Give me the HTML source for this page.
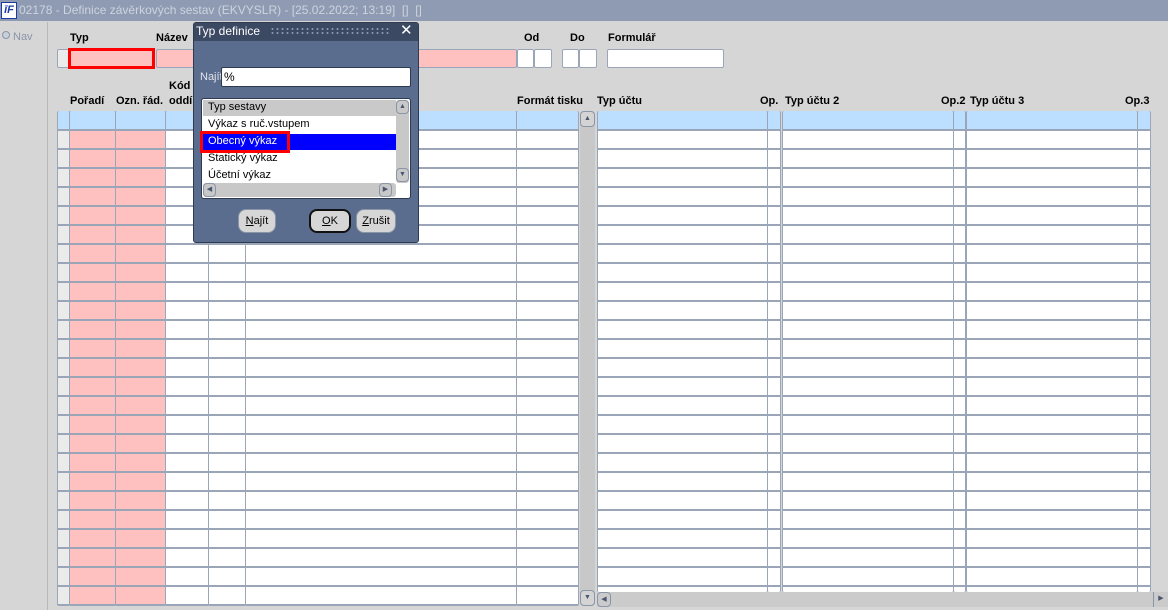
<!DOCTYPE html>
<html><head><meta charset="utf-8"><style>
*{margin:0;padding:0;box-sizing:border-box}
body{width:1168px;height:610px;background:#d6d6d6;position:relative;overflow:hidden;font-family:"Liberation Sans",sans-serif;font-size:11px;color:#000}
.a{position:absolute}
.lbl{position:absolute;font-weight:bold;font-size:11px}
.col{position:absolute;top:111px;height:495px;border-left:1px solid #9aa6b8;border-right:1px solid #9aa6b8;border-radius:2px}
.in{position:absolute;border:1px solid #9aa6b8;border-radius:2px;background:#fff}
</style></head><body>
<!-- title bar -->
<div class="a" style="left:0;top:0;width:1168px;height:21px;background:#8e9bb3"></div>
<div class="a" style="left:1px;top:2px;width:16px;height:17px;background:#fff;border:1px solid #1e3ca0;color:#1a3aa8;font:italic bold 11px 'Liberation Sans';line-height:15px;text-align:center">īF</div>
<div class="a" style="left:19px;top:3px;color:#cdd4df;font-size:12px;white-space:nowrap">02178 - Definice závěrkových sestav (EKVYSLR) - [25.02.2022; 13:19]&nbsp; [] &nbsp;[]</div>
<!-- left nav -->
<div class="a" style="left:47px;top:22px;width:1px;height:588px;background:#b8b8b8"></div>
<div class="a" style="left:2px;top:31px;width:8px;height:8px;border:1px solid #8a95a8;border-radius:50%;background:#c8d0dc"></div>
<div class="a" style="left:13px;top:31px;color:#8a95a8;font-size:11px">Nav</div>

<!-- header fields -->
<div class="lbl" style="left:70px;top:32px">Typ</div>
<div class="lbl" style="left:156px;top:32px">Název</div>
<div class="lbl" style="left:524px;top:32px">Od</div>
<div class="lbl" style="left:570px;top:32px">Do</div>
<div class="lbl" style="left:608px;top:32px">Formulář</div>
<div class="in" style="left:57px;top:49px;width:13px;height:19px;background:#ebebeb"></div>
<div class="in" style="left:156px;top:49px;width:361px;height:19px;background:#ffc0c0"></div>
<div class="a" style="left:68px;top:48px;width:87px;height:21px;border:3px solid #f00;background:#ffc0c0"></div>
<div class="in" style="left:517px;top:49px;width:17px;height:19px"></div>
<div class="in" style="left:534px;top:49px;width:18px;height:19px"></div>
<div class="in" style="left:562px;top:49px;width:17px;height:19px"></div>
<div class="in" style="left:579px;top:49px;width:18px;height:19px"></div>
<div class="in" style="left:607px;top:49px;width:117px;height:19px"></div>

<!-- grid headers -->
<div class="lbl" style="left:70px;top:95px">Pořadí</div>
<div class="lbl" style="left:116px;top:95px">Ozn. řád.</div>
<div class="lbl" style="left:169px;top:80px">Kód</div>
<div class="lbl" style="left:169px;top:95px">oddí</div>
<div class="lbl" style="left:517px;top:95px">Formát tisku</div>
<div class="lbl" style="left:597px;top:95px">Typ účtu</div>
<div class="lbl" style="left:760px;top:95px">Op.</div>
<div class="lbl" style="left:785px;top:95px">Typ účtu 2</div>
<div class="lbl" style="left:941px;top:95px">Op.2</div>
<div class="lbl" style="left:970px;top:95px">Typ účtu 3</div>
<div class="lbl" style="left:1125px;top:95px">Op.3</div>

<!-- columns -->
<div class="col" style="left:57px;width:13px;background:linear-gradient(#bddfff 0 18px,transparent 18px),repeating-linear-gradient(#9aa6b8 0 1px,#ebebeb 1px 18px,#9aa6b8 18px 19px)"></div>
<div class="col" style="left:69px;width:47px;background:linear-gradient(#bddfff 0 18px,transparent 18px),repeating-linear-gradient(#9aa6b8 0 1px,#ffc0c0 1px 18px,#9aa6b8 18px 19px)"></div>
<div class="col" style="left:115px;width:51px;background:linear-gradient(#bddfff 0 18px,transparent 18px),repeating-linear-gradient(#9aa6b8 0 1px,#ffc0c0 1px 18px,#9aa6b8 18px 19px)"></div>
<div class="col" style="left:165px;width:44px;background:linear-gradient(#bddfff 0 18px,transparent 18px),repeating-linear-gradient(#9aa6b8 0 1px,#fff 1px 18px,#9aa6b8 18px 19px)"></div>
<div class="col" style="left:208px;width:38px;background:linear-gradient(#bddfff 0 18px,transparent 18px),repeating-linear-gradient(#9aa6b8 0 1px,#fff 1px 18px,#9aa6b8 18px 19px)"></div>
<div class="col" style="left:245px;width:272px;background:linear-gradient(#bddfff 0 18px,transparent 18px),repeating-linear-gradient(#9aa6b8 0 1px,#fff 1px 18px,#9aa6b8 18px 19px)"></div>
<div class="col" style="left:516px;width:63px;background:linear-gradient(#bddfff 0 18px,transparent 18px),repeating-linear-gradient(#9aa6b8 0 1px,#fff 1px 18px,#9aa6b8 18px 19px)"></div>
<!-- v scrollbar -->
<div class="a" style="left:580px;top:111px;width:15px;height:495px;background:#c8c8c8;border-radius:3px"></div>
<div class="a" style="left:580px;top:111px;width:15px;height:16px;border:1px solid #8a95a8;border-radius:4px;background:#d4d4d4;font-size:7px;color:#4a5670;text-align:center;line-height:14px">▲</div>
<div class="a" style="left:580px;top:590px;width:15px;height:16px;border:1px solid #8a95a8;border-radius:4px;background:#d4d4d4;font-size:7px;color:#4a5670;text-align:center;line-height:14px">▼</div>

<!-- right columns -->
<div class="col" style="left:597px;width:171px;height:481px;background:linear-gradient(#bddfff 0 18px,transparent 18px),repeating-linear-gradient(#9aa6b8 0 1px,#fff 1px 18px,#9aa6b8 18px 19px)"></div>
<div class="col" style="left:767px;width:14px;height:481px;background:linear-gradient(#bddfff 0 18px,transparent 18px),repeating-linear-gradient(#9aa6b8 0 1px,#fff 1px 18px,#9aa6b8 18px 19px)"></div>
<div class="col" style="left:782px;width:172px;height:481px;background:linear-gradient(#bddfff 0 18px,transparent 18px),repeating-linear-gradient(#9aa6b8 0 1px,#fff 1px 18px,#9aa6b8 18px 19px)"></div>
<div class="col" style="left:953px;width:13px;height:481px;background:linear-gradient(#bddfff 0 18px,transparent 18px),repeating-linear-gradient(#9aa6b8 0 1px,#fff 1px 18px,#9aa6b8 18px 19px)"></div>
<div class="col" style="left:966px;width:172px;height:481px;background:linear-gradient(#bddfff 0 18px,transparent 18px),repeating-linear-gradient(#9aa6b8 0 1px,#fff 1px 18px,#9aa6b8 18px 19px)"></div>
<div class="col" style="left:1137px;width:14px;height:481px;background:linear-gradient(#bddfff 0 18px,transparent 18px),repeating-linear-gradient(#9aa6b8 0 1px,#fff 1px 18px,#9aa6b8 18px 19px)"></div>
<!-- h scrollbar -->
<div class="a" style="left:597px;top:592px;width:571px;height:15px;background:#cbcbcb"></div>
<div class="a" style="left:597px;top:592px;width:14px;height:15px;border:1px solid #8a95a8;border-radius:4px;font-size:7px;color:#4a5670;text-align:center;line-height:13px">◀</div>
<div class="a" style="left:1153px;top:592px;width:15px;height:15px;border-left:1px solid #8a95a8;font-size:7px;color:#4a5670;text-align:center;line-height:13px">▶</div>

<!-- dialog -->
<div class="a" style="left:193px;top:22px;width:226px;height:221px;background:#5b6d8e;border:1px solid #2e3a50;border-radius:3px"></div>
<div class="a" style="left:194px;top:23px;width:224px;height:18px;background:#3b4963"></div>
<div class="a" style="left:196px;top:24px;color:#fff;font-size:12px">Typ definice</div>
<div class="a" style="left:270px;top:27px;width:120px;height:9px;background:radial-gradient(circle,#8a96ac 0.8px,transparent 1.2px) 0 0/5px 4px"></div>
<div class="a" style="left:400px;top:21px;color:#fff;font-size:15px">✕</div>
<div class="a" style="left:200px;top:71px;color:#dfe4ec;font-size:11px">Najít</div>
<div class="a" style="left:221px;top:67px;width:190px;height:20px;background:#fff;border:1px solid #2e3a50;border-radius:2px;padding:2px 2px;font-size:12px">%</div>
<!-- list -->
<div class="a" style="left:201px;top:98px;width:210px;height:101px;background:#fff;border:1px solid #2e3a50;border-radius:3px"></div>
<div class="a" style="left:203px;top:100px;width:193px;height:16px;background:#c9c9c9;padding:1px 5px;font-size:11px">Typ sestavy</div>
<div class="a" style="left:208px;top:118px;font-size:11px">Výkaz s ruč.vstupem</div>
<div class="a" style="left:203px;top:134px;width:193px;height:16px;background:#0000ff"></div>
<div class="a" style="left:200px;top:131px;width:90px;height:22px;border:3px solid #f00"></div>
<div class="a" style="left:208px;top:135px;font-size:11px;color:#fff">Obecný výkaz</div>
<div class="a" style="left:208px;top:152px;font-size:11px">Statický výkaz</div>
<div class="a" style="left:208px;top:169px;font-size:11px">Účetní výkaz</div>
<div class="a" style="left:396px;top:100px;width:13px;height:83px;background:#c8c8c8;border-radius:3px"></div>
<div class="a" style="left:396px;top:100px;width:13px;height:14px;border:1px solid #8a95a8;border-radius:4px;font-size:7px;color:#4a5670;text-align:center;line-height:12px">▲</div>
<div class="a" style="left:396px;top:168px;width:13px;height:14px;border:1px solid #8a95a8;border-radius:4px;font-size:7px;color:#4a5670;text-align:center;line-height:12px">▼</div>
<div class="a" style="left:203px;top:183px;width:193px;height:14px;background:#c8c8c8;border-radius:3px"></div>
<div class="a" style="left:203px;top:183px;width:13px;height:14px;border:1px solid #8a95a8;border-radius:4px;font-size:7px;color:#4a5670;text-align:center;line-height:12px">◀</div>
<div class="a" style="left:379px;top:183px;width:13px;height:14px;border:1px solid #8a95a8;border-radius:4px;font-size:7px;color:#4a5670;text-align:center;line-height:12px">▶</div>
<!-- buttons -->
<div class="a" style="left:238px;top:209px;width:38px;height:24px;background:#d6d6d6;border:1px solid #8a95a8;border-radius:8px;text-align:center;line-height:22px;font-size:11px"><u>N</u>ajít</div>
<div class="a" style="left:309px;top:209px;width:42px;height:24px;background:#d6d6d6;border:2px solid #111;border-radius:8px;text-align:center;line-height:20px;font-size:11px"><u>O</u>K</div>
<div class="a" style="left:356px;top:209px;width:40px;height:24px;background:#d6d6d6;border:1px solid #8a95a8;border-radius:8px;text-align:center;line-height:22px;font-size:11px"><u>Z</u>rušit</div>
</body></html>
